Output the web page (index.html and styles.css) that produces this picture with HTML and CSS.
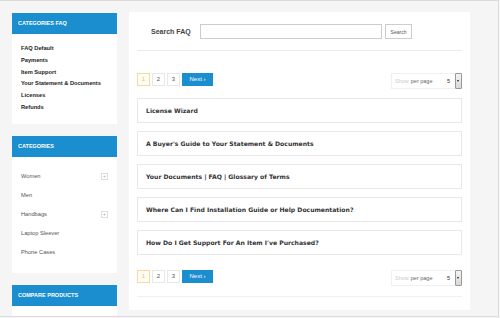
FILE: index.html
```html
<!DOCTYPE html>
<html lang="en">
<head>
    <meta charset="UTF-8">
    <title>FAQ</title>
    <link rel="stylesheet" href="styles.css">
</head>
<body>
    <div class="page">
        <div class="sidebar">
            <div class="block">
                <div class="block-title">Categories FAQ</div>
                <ul class="faq-cats">
                    <li>FAQ Default</li>
                    <li>Payments</li>
                    <li>Item Support</li>
                    <li>Your Statement &amp; Documents</li>
                    <li>Licenses</li>
                    <li>Refunds</li>
                </ul>
            </div>
            <div class="block">
                <div class="block-title">Categories</div>
                <ul class="shop-cats">
                    <li>Women <span class="plus">+</span></li>
                    <li>Men</li>
                    <li>Handbags <span class="plus">+</span></li>
                    <li>Laptop Sleever</li>
                    <li>Phone Cases</li>
                </ul>
            </div>
            <div class="block">
                <div class="block-title">Compare Products</div>
                <p class="empty">You have no items to compare.</p>
            </div>
        </div>

        <div class="main">
            <div class="search-row">
                <label class="search-label">Search FAQ</label>
                <input type="text" class="search-input">
                <button class="search-btn">Search</button>
            </div>

            <div class="toolbar">
                <div class="pages">
                    <span class="page-num current">1</span>
                    <span class="page-num">2</span>
                    <span class="page-num">3</span>
                    <span class="page-next">Next &rsaquo;</span>
                </div>
                <div class="limiter">
                    <span class="show">Show</span>
                    <span class="per">per page</span>
                    <span class="count">5</span>
                    <span class="drop"></span>
                </div>
            </div>

            <div class="faq-list">
                <div class="faq-item">License Wizard</div>
                <div class="faq-item">A Buyer's Guide to Your Statement &amp; Documents</div>
                <div class="faq-item">Your Documents | FAQ | Glossary of Terms</div>
                <div class="faq-item">Where Can I Find Installation Guide or Help Documentation?</div>
                <div class="faq-item">How Do I Get Support For An Item I've Purchased?</div>
            </div>

            <div class="toolbar bottom">
                <div class="pages">
                    <span class="page-num current">1</span>
                    <span class="page-num">2</span>
                    <span class="page-num">3</span>
                    <span class="page-next">Next &rsaquo;</span>
                </div>
                <div class="limiter">
                    <span class="show">Show</span>
                    <span class="per">per page</span>
                    <span class="count">5</span>
                    <span class="drop"></span>
                </div>
            </div>
        </div>
    </div>
</body>
</html>
```

FILE: styles.css
```css
body {
    margin: 0;
    font-family: "Liberation Sans", Arial, sans-serif;
    background: #f5f5f5;
}

.page {
    display: flex;
    gap: 12px;
    width: 499px;
    height: 317px;
    box-sizing: border-box;
    padding: 11px 0 0 12px;
    border-top: 1px solid #dcdcdc;
    border-right: 1px solid #dcdcdc;
    border-bottom: 1px solid #dcdcdc;
    background: #f5f5f5;
    overflow: hidden;
}

/* sidebar */
.sidebar {
    width: 105px;
    flex-shrink: 0;
    padding-top: 1px;
}

.block {
    background: #fff;
    margin-bottom: 12px;
}

.block-title {
    height: 21px;
    line-height: 21px;
    padding-left: 6px;
    background: #1b8ed0;
    color: #fff;
    font-size: 5.5px;
    font-weight: bold;
    text-transform: uppercase;
}

.faq-cats {
    list-style: none;
    margin: 0;
    padding: 9px 0 10px 9px;
}

.faq-cats li {
    height: 11.8px;
    line-height: 11.8px;
    font-size: 5.7px;
    font-weight: bold;
    color: #222;
}

.shop-cats {
    list-style: none;
    margin: 0;
    padding: 10px 9px 11px 9px;
}

.shop-cats li {
    display: flex;
    justify-content: space-between;
    align-items: center;
    height: 19px;
    font-size: 5.7px;
    color: #555;
}

.plus {
    width: 5px;
    height: 5px;
    border: 1px solid #ddd;
    font-size: 5px;
    line-height: 5px;
    text-align: center;
    color: #aaa;
}

.empty {
    margin: 0;
    padding: 9px 9px;
    font-size: 5.6px;
    color: #666;
}

/* main */
.main {
    width: 341px;
    height: 298px;
    box-sizing: border-box;
    background: #fff;
    padding: 12px 8px 0 8px;
}

.search-row {
    display: flex;
    align-items: center;
    padding-left: 14px;
    padding-bottom: 11px;
    border-bottom: 1px solid #ebebeb;
}

.search-label {
    width: 49px;
    font-size: 7px;
    font-weight: bold;
    color: #444;
}

.search-input {
    width: 182px;
    height: 15px;
    box-sizing: border-box;
    border: 1px solid #ccc;
    margin: 0 3px 0 0;
    padding: 0;
}

.search-btn {
    width: 27px;
    height: 15px;
    padding: 0;
    border: 1px solid #ccc;
    background: #fff;
    font-family: "Liberation Sans", Arial, sans-serif;
    font-size: 5px;
    color: #555;
}

.toolbar {
    display: flex;
    justify-content: space-between;
    align-items: flex-start;
    margin-top: 22px;
}

.toolbar.bottom {
    margin-top: 15px;
    padding-bottom: 10px;
    border-bottom: 1px solid #f0f0f0;
}

.pages {
    display: flex;
    gap: 1px;
}

.page-num {
    width: 11px;
    height: 11px;
    margin-right: 1px;
    border: 1px solid #e8e8e8;
    text-align: center;
    line-height: 11px;
    font-size: 6px;
    color: #555;
}

.page-num.current {
    border-color: #f3dc9c;
    background: #fffdf3;
    color: #e0c080;
}

.page-next {
    width: 31px;
    height: 13px;
    line-height: 13px;
    text-align: center;
    background: #1b8ed0;
    color: #fff;
    font-size: 6px;
}

.limiter {
    display: flex;
    align-items: center;
    width: 71px;
    height: 16px;
    box-sizing: border-box;
    border: 1px solid #f0f0f0;
    padding-left: 3px;
    font-size: 5.5px;
}

.limiter .show {
    color: #ccc;
    margin-right: 2px;
}

.limiter .per {
    color: #666;
}

.limiter .count {
    margin-left: auto;
    margin-right: 5px;
    color: #333;
}

.drop {
    position: relative;
    width: 7px;
    height: 16px;
    box-sizing: border-box;
    margin-right: -1px;
    border: 1px solid #999;
    border-radius: 1px;
    background: linear-gradient(#f4f4f4, #d8d8d8);
}

.drop::after {
    content: "";
    position: absolute;
    left: 1px;
    top: 6px;
    border-left: 1.5px solid transparent;
    border-right: 1.5px solid transparent;
    border-top: 2px solid #222;
}

.faq-list {
    margin-top: 9px;
}

.faq-item {
    height: 25px;
    box-sizing: border-box;
    margin-bottom: 8px;
    padding-left: 8px;
    border: 1px solid #e8e8e8;
    line-height: 23px;
    font-family: "DejaVu Sans", Verdana, sans-serif;
    font-size: 6.1px;
    font-weight: bold;
    color: #333;
}

.faq-item:last-child {
    margin-bottom: 0;
}
```
